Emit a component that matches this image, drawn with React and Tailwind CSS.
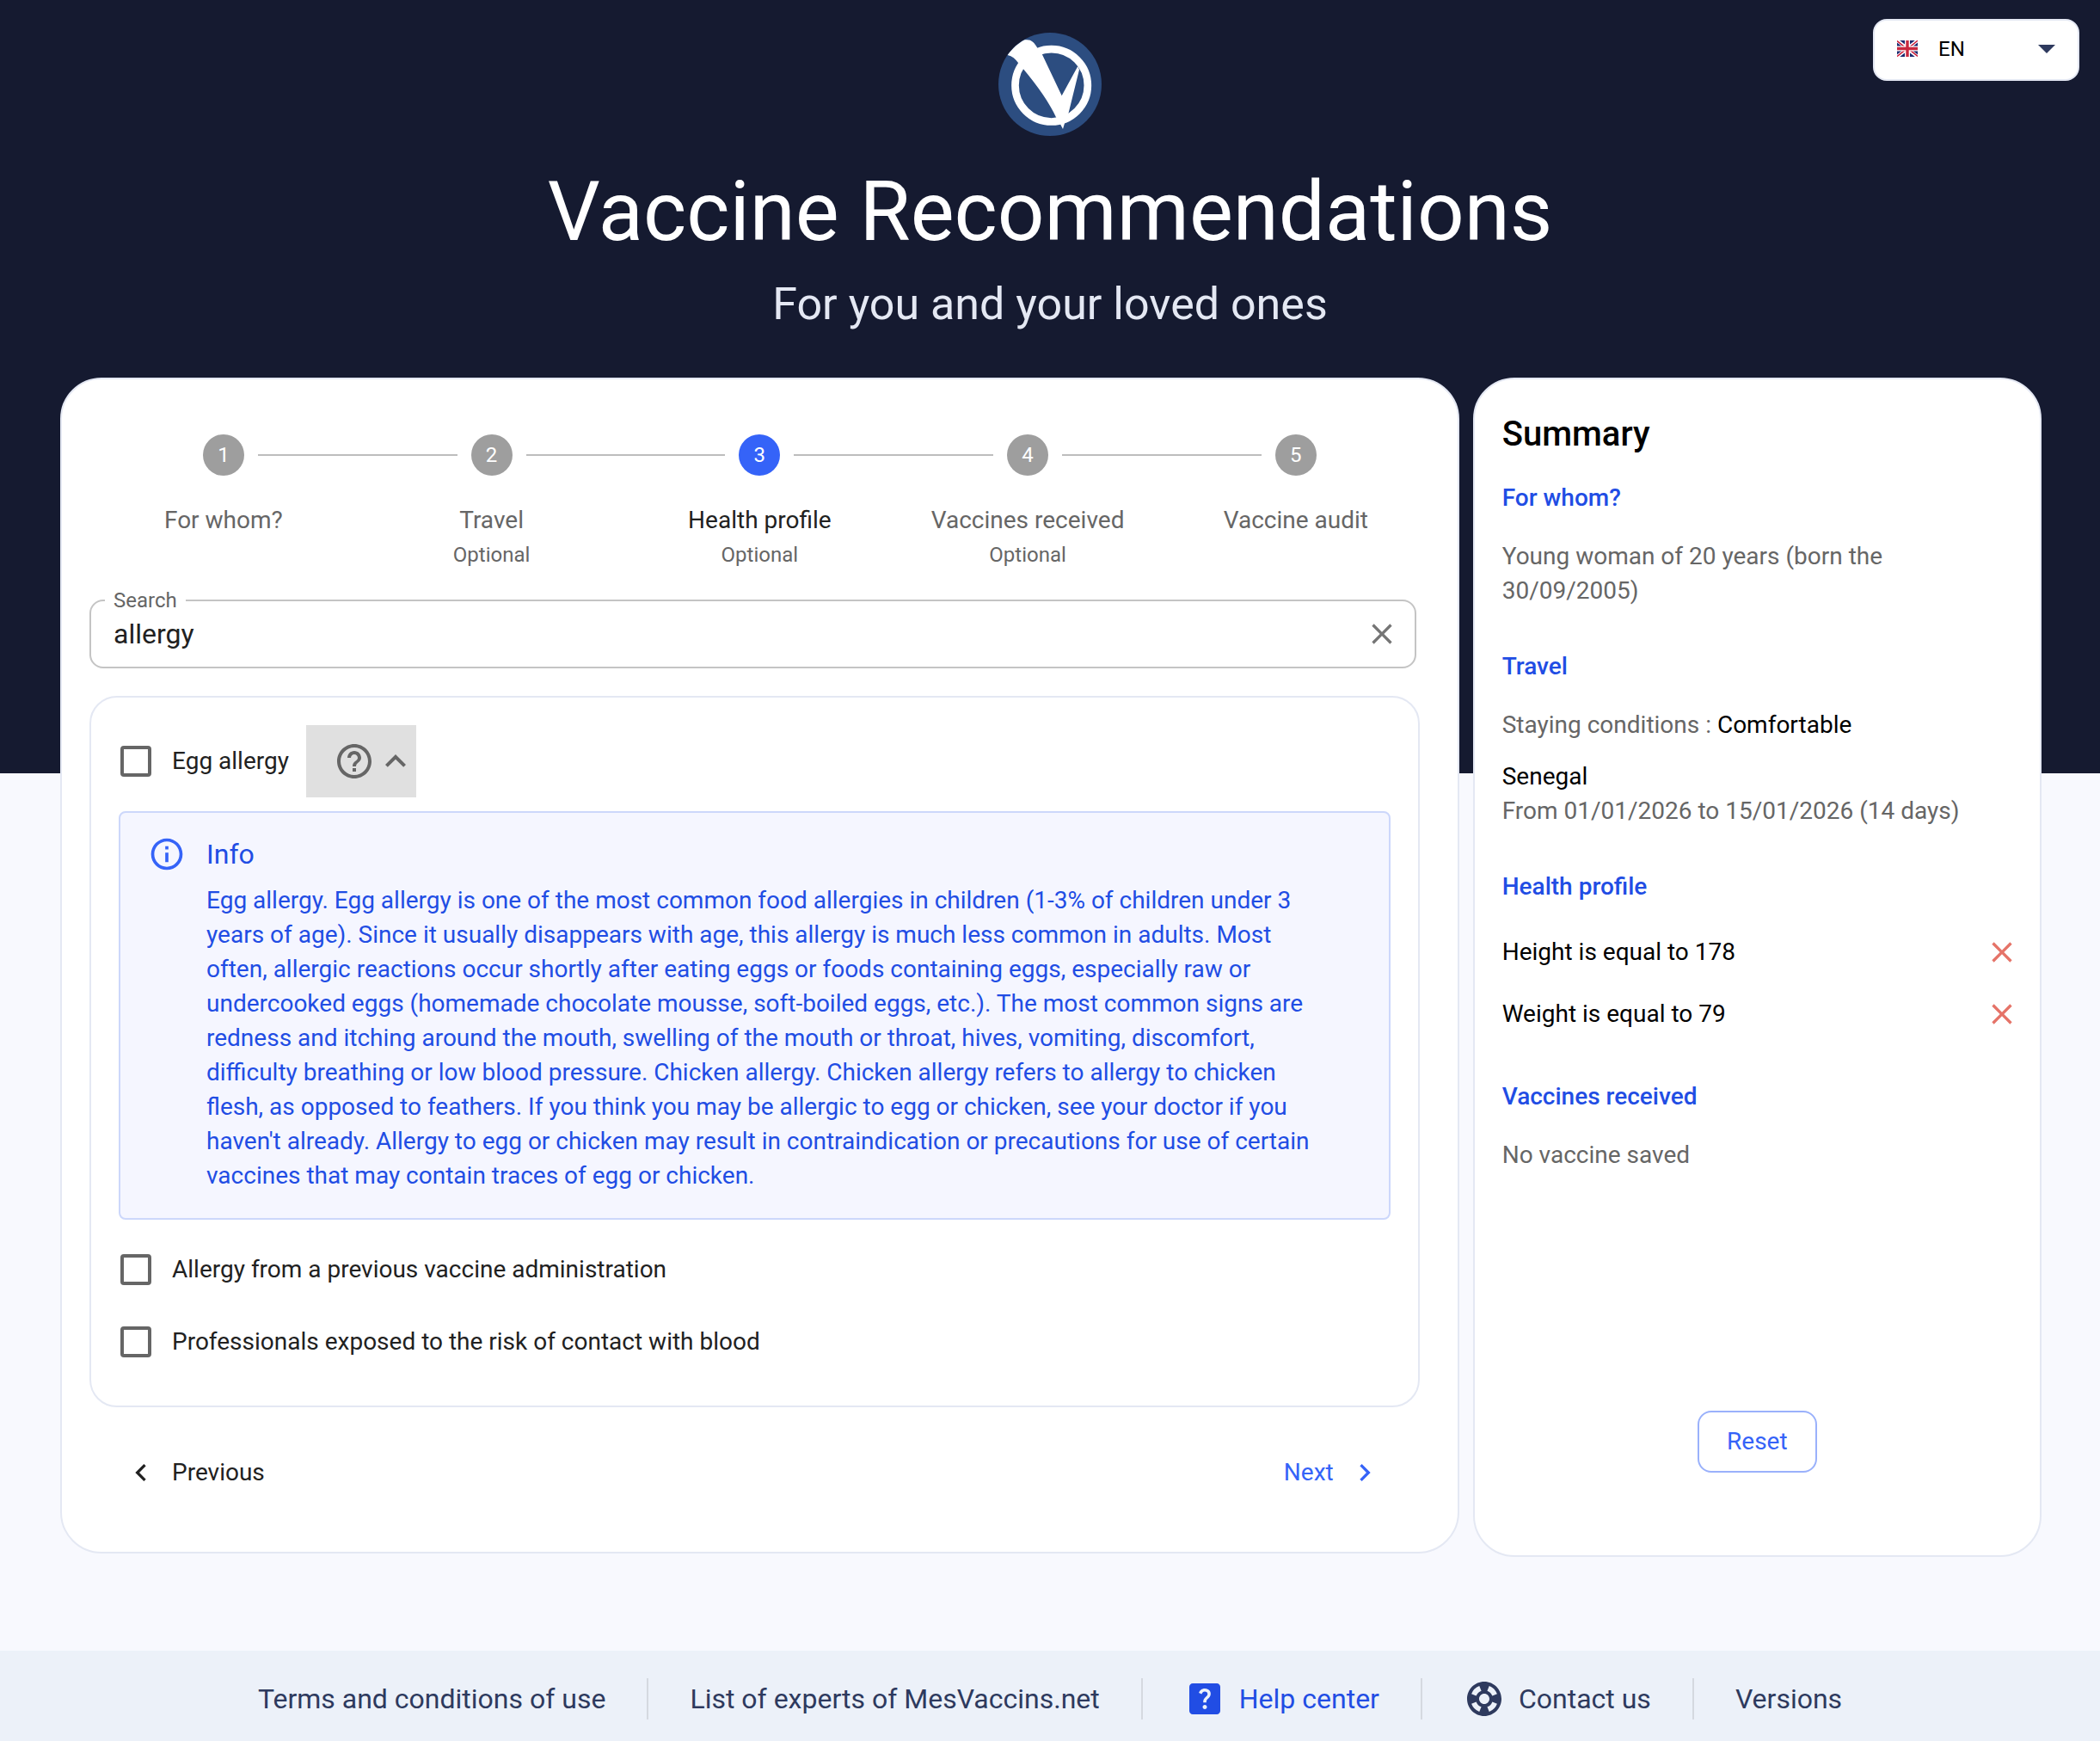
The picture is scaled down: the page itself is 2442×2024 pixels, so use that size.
import React, { useState } from "react"
import {
  MdArrowDropDown,
  MdChevronLeft,
  MdChevronRight,
  MdClose,
  MdExpandLess,
  MdHelpCenter,
  MdHelpOutline,
  MdInfoOutline,
  MdSupport
} from "react-icons/md"
import clsx from "clsx"

const steps = [
  { label: "For whom?" },
  { label: "Travel", optional: true },
  { label: "Health profile", optional: true, active: true },
  { label: "Vaccines received", optional: true },
  { label: "Vaccine audit" }
]

const eggInfo =
  "Egg allergy. Egg allergy is one of the most common food allergies in children (1-3% of children under 3 years of age). Since it usually disappears with age, this allergy is much less common in adults. Most often, allergic reactions occur shortly after eating eggs or foods containing eggs, especially raw or undercooked eggs (homemade chocolate mousse, soft-boiled eggs, etc.). The most common signs are redness and itching around the mouth, swelling of the mouth or throat, hives, vomiting, discomfort, difficulty breathing or low blood pressure. Chicken allergy. Chicken allergy refers to allergy to chicken flesh, as opposed to feathers. If you think you may be allergic to egg or chicken, see your doctor if you haven't already. Allergy to egg or chicken may result in contraindication or precautions for use of certain vaccines that may contain traces of egg or chicken."

const conditions = [
  { id: "egg", label: "Egg allergy", info: eggInfo },
  { id: "previous-vaccine", label: "Allergy from a previous vaccine administration" },
  { id: "blood", label: "Professionals exposed to the risk of contact with blood" }
]

const footerLinks = [
  { label: "Terms and conditions of use" },
  { label: "List of experts of MesVaccins.net" },
  { label: "Help center", icon: MdHelpCenter, highlight: true },
  { label: "Contact us", icon: MdSupport },
  { label: "Versions" }
]

function Logo() {
  return (
    <svg viewBox="0 0 360 360" className="size-[120px]" aria-hidden="true">
      <circle cx="180" cy="180" r="180" fill="#2c4d80" />
      <circle cx="185" cy="184" r="126.5" fill="none" stroke="#fff" strokeWidth="26" />
      <path
        fill="#fff"
        d="M32 78C48 56 68 37 92 25C114 22 124 32 136 53L152 74L221 220L277 117L282 129L245 279L232 313L225 336L216 319L201 295C180 248 140 190 86 125L69 105C60 92 48 82 32 78Z"
      />
    </svg>
  )
}

function Flag() {
  return (
    <svg viewBox="0 0 24 19" className="h-[19px] w-6" aria-hidden="true">
      <path fill="#1b2a70" d="M0 0h24v19H0z" />
      <path stroke="#fff" strokeWidth="4" d="M0 0l24 19M24 0L0 19" />
      <path stroke="#c8102e" strokeWidth="1.4" d="M0 .6l10 8M24 .2L14 8.200M0 18.600l10-8M24 18.400l-10-8" />
      <path stroke="#fff" strokeWidth="6" d="M12 0v19M0 9.500h24" />
      <path stroke="#c8283f" strokeWidth="3.400" d="M12 0v19M0 9.500h24" />
    </svg>
  )
}

function LanguageSelect() {
  return (
    <div className="absolute top-[22px] right-6 h-[72px] w-60">
      <select
        aria-label="Language"
        defaultValue="en"
        className="h-full w-full appearance-none rounded-2xl border-2 border-[#e4e8f3] bg-white pb-0.5 pl-[74px] text-2xl text-black"
      >
        <option value="en">EN</option>
      </select>
      <div className="pointer-events-none absolute inset-0 flex items-center justify-between pr-[14px] pb-1 pl-7">
        <Flag />
        <MdArrowDropDown className="size-12 text-[#2e3a5e]" />
      </div>
    </div>
  )
}

function Stepper() {
  return (
    <ol className="grid grid-cols-5">
      {steps.map((step, index) => (
        <li key={step.label} className="text-center">
          <div className="mb-8 flex items-center gap-4">
            <div className={clsx("h-0.5 flex-1", index > 0 && "bg-[#bdbdbd]")} />
            <div
              className={clsx(
                "flex size-12 items-center justify-center rounded-full text-2xl text-white",
                step.active ? "bg-[#3563f8]" : "bg-[#9e9e9e]"
              )}
            >
              {index + 1}
            </div>
            <div className={clsx("h-0.5 flex-1", index < steps.length - 1 && "bg-[#bdbdbd]")} />
          </div>
          <div className={clsx("text-[28px] leading-10", step.active ? "text-[#212121]" : "text-[#666]")}>
            {step.label}
          </div>
          {step.optional && <div className="text-2xl leading-10 text-[#666]">Optional</div>}
        </li>
      ))}
    </ol>
  )
}

function SearchField() {
  const [value, setValue] = useState("allergy")

  return (
    <div className="relative mt-8 mr-4 flex h-20 items-center rounded-2xl border-2 border-[#c4c4c4] pr-[18px] pl-[26px]">
      <label
        htmlFor="search"
        className="absolute -top-[17px] left-4 bg-white px-[10px] text-2xl leading-8 text-[#666]"
      >
        Search
      </label>
      <input
        id="search"
        type="text"
        value={value}
        onChange={(e) => setValue(e.target.value)}
        className="min-w-0 flex-1 bg-transparent text-[32px] text-[#212121] outline-none"
      />
      <button type="button" aria-label="Clear" onClick={() => setValue("")}>
        <MdClose className="size-10 text-[#757575]" />
      </button>
    </div>
  )
}

function InfoBox({ children }) {
  return (
    <div className="my-4 flex gap-6 rounded-lg border-2 border-[#ccd7fb] bg-[#f5f6ff] pt-[26px] pr-16 pb-[29px] pl-8 text-[#214de4]">
      <MdInfoOutline className="size-11 shrink-0 text-[#3563f8]" />
      <div>
        <h2 className="mb-3 text-[32px] leading-11">Info</h2>
        <p className="text-[28px] leading-10">{children}</p>
      </div>
    </div>
  )
}

function ConditionRow({ condition }) {
  const [open, setOpen] = useState(Boolean(condition.info))

  return (
    <div>
      <div className="flex h-[84px] items-center gap-5">
        <label className="flex items-center gap-6 pl-0.5 text-[28px] text-[#212121]">
          <input
            id={condition.id}
            type="checkbox"
            className="size-9 appearance-none rounded-sm border-4 border-[#666] checked:bg-[#3563f8]"
          />
          {condition.label}
        </label>
        {condition.info && (
          <button
            type="button"
            aria-label="More information"
            aria-expanded={open}
            onClick={() => setOpen(!open)}
            className="flex h-full items-center bg-[#e0e0e0] pl-8 text-[#666]"
          >
            <MdHelpOutline className="size-12" />
            <MdExpandLess className="size-12" />
          </button>
        )}
      </div>
      {condition.info && open && <InfoBox>{condition.info}</InfoBox>}
    </div>
  )
}

function SummarySection({ title, children }) {
  return (
    <section className="mb-12">
      <h3 className="mb-7 text-[28px] leading-10 font-medium text-[#214de4]">{title}</h3>
      {children}
    </section>
  )
}

function SummaryItem({ children }) {
  return (
    <li className="flex h-[72px] items-center justify-between text-black">
      {children}
      <button type="button" aria-label="Remove">
        <MdClose className="size-10 text-[#e57368]" />
      </button>
    </li>
  )
}

function Summary() {
  return (
    <aside className="flex flex-col rounded-[48px] border-2 border-[#e4e8f3] bg-white px-8 pt-10 pb-24 text-[28px] leading-10 text-[#666]">
      <h2 className="mb-[30px] text-[40px] leading-12 font-medium text-black">Summary</h2>
      <SummarySection title="For whom?">
        <p className="pr-20">Young woman of 20 years (born the 30/09/2005)</p>
      </SummarySection>
      <SummarySection title="Travel">
        <p className="mb-5">
          Staying conditions : <span className="text-black">Comfortable</span>
        </p>
        <p className="text-black">Senegal</p>
        <p>From 01/01/2026 to 15/01/2026 (14 days)</p>
      </SummarySection>
      <SummarySection title="Health profile">
        <ul className="-my-2 -mr-2">
          <SummaryItem>Height is equal to 178</SummaryItem>
          <SummaryItem>Weight is equal to 79</SummaryItem>
        </ul>
      </SummarySection>
      <SummarySection title="Vaccines received">
        <p>No vaccine saved</p>
      </SummarySection>
      <button
        type="button"
        className="mt-auto h-[72px] self-center rounded-2xl border-2 border-[#9ab1fb] px-8 text-[#3563f8]"
      >
        Reset
      </button>
    </aside>
  )
}

function Footer() {
  return (
    <footer className="mt-auto bg-[#ecf1f9] pt-8 pb-[25px]">
      <nav className="flex justify-center divide-x-2 divide-[#d5d9e0]">
        {footerLinks.map(({ label, icon: Icon, highlight }) => (
          <a
            key={label}
            href="#"
            className={clsx(
              "flex h-12 items-center gap-4 px-12 text-[32px]",
              highlight ? "text-[#214de4]" : "text-[#2e3a5e]"
            )}
          >
            {Icon && <Icon className="size-12" />}
            {label}
          </a>
        ))}
      </nav>
    </footer>
  )
}

function App() {
  return (
    <div className="relative flex min-h-screen flex-col bg-[linear-gradient(#151a30_899px,#f8f9fe_899px)] font-[Roboto,sans-serif]">
      <LanguageSelect />
      <header className="flex flex-col items-center pt-[38px] pb-[53px]">
        <Logo />
        <h1 className="mt-8 text-[96px] leading-28 text-white">Vaccine Recommendations</h1>
        <p className="mt-5 text-[52px] leading-16 text-[#e4e8f3]">For you and your loved ones</p>
      </header>

      <main className="mb-[108px] grid grid-cols-[1626fr_661fr] gap-4 pr-[68px] pl-[70px]">
        <div className="mb-1 rounded-[48px] border-2 border-[#e4e8f3] bg-white px-8 pt-16 pb-14">
          <Stepper />
          <SearchField />
          <div className="mt-8 mr-3 rounded-[32px] border-2 border-[#e4e8f3] p-8">
            {conditions.map((condition) => (
              <ConditionRow key={condition.id} condition={condition} />
            ))}
          </div>
          <div className="mt-10 mr-4 flex h-[72px] items-center justify-between px-10 text-[28px]">
            <button type="button" className="flex items-center gap-4 text-[#212121]">
              <MdChevronLeft className="size-10" />
              Previous
            </button>
            <button type="button" className="flex items-center gap-4 text-[#3563f8]">
              Next
              <MdChevronRight className="size-10" />
            </button>
          </div>
        </div>
        <Summary />
      </main>

      <Footer />
    </div>
  )
}

export default App
